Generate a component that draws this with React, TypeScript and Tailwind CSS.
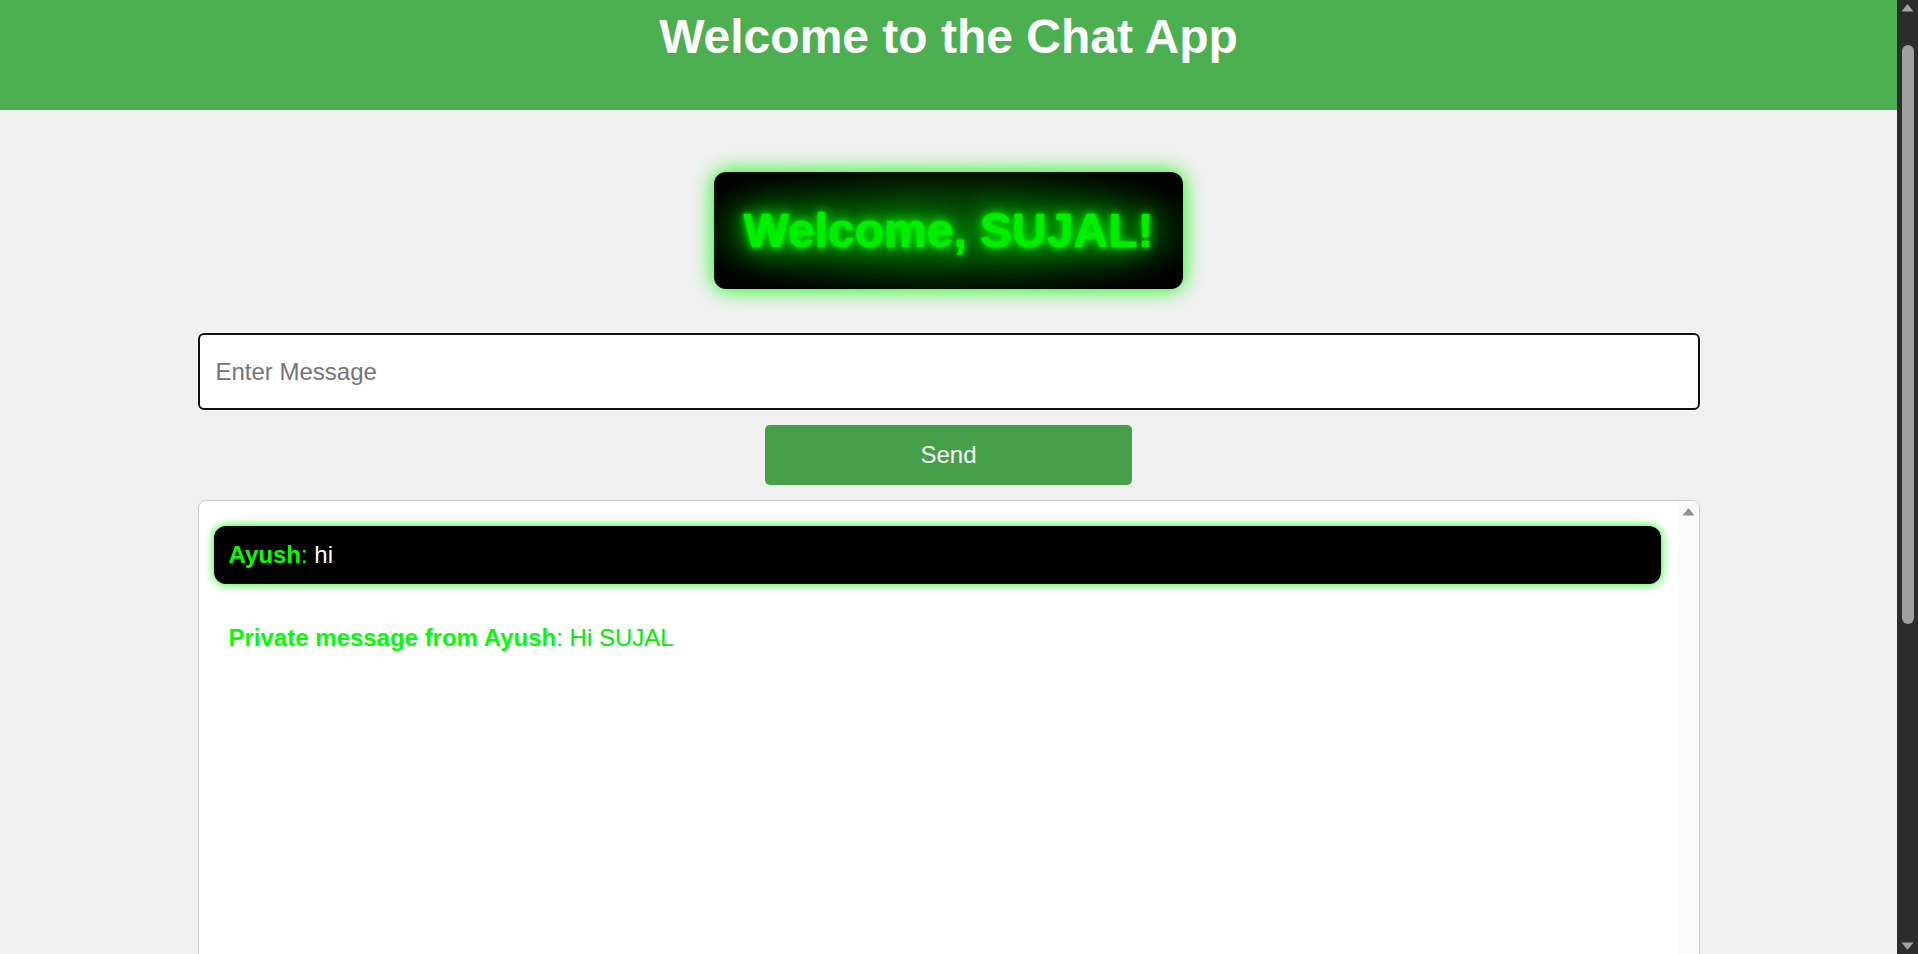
import { useState } from 'react';

interface ChatMessage {
  id: number;
  from: string;
  text: string;
  isPrivate?: boolean;
}

const initialMessages: ChatMessage[] = [
  { id: 1, from: 'Ayush', text: 'hi' },
  { id: 2, from: 'Ayush', text: 'Hi SUJAL', isPrivate: true },
];

function Arrow({ dir, color }: { dir: 'up' | 'down'; color: string }) {
  return (
    <svg width="13" height="8" viewBox="0 0 13 8">
      <path
        d={dir === 'up' ? 'M6.5 0.5 Q7 0.5 7.5 1.2 L12.5 7.5 L0.5 7.5 L5.5 1.2 Q6 0.5 6.5 0.5 Z' : 'M0.5 0.5 L12.5 0.5 L7.5 6.8 Q7 7.5 6.5 7.5 Q6 7.5 5.5 6.8 Z'}
        fill={color}
      />
    </svg>
  );
}

export default function App() {
  const [message, setMessage] = useState('');
  const [messages] = useState<ChatMessage[]>(initialMessages);
  const username = 'SUJAL';

  return (
    <div className="flex h-screen overflow-hidden bg-[#f0f0f0] font-['Liberation_Sans',Arial,sans-serif]">
      <div className="flex-1 overflow-hidden">
        {/* Top banner */}
        <header className="h-[110px] bg-[#4caf50] pt-[9px] text-center">
          <h1 className="text-[48px] font-bold leading-[55px] text-white">Welcome to the Chat App</h1>
        </header>

        <main className="flex flex-col items-center pt-[62px] pb-[15px]">
          <div className="rounded-[12px] bg-[radial-gradient(ellipse_at_center,#0b4d0b_0%,#063206_40%,#000000_85%)] px-[30px] py-[31px] shadow-[0_0_20px_#00ff00]">
            <h2 className="text-[48px] font-bold leading-[55px] text-[#00f000] [text-shadow:0_0_3px_#00ff00,0_0_10px_#00ff00,0_0_25px_#00ff00,0_0_50px_#00cc00]">
              Welcome, {username}!
            </h2>
          </div>

          <input
            autoFocus
            value={message}
            onChange={e => setMessage(e.target.value)}
            placeholder="Enter Message"
            className="mt-[44px] h-[77px] w-[1502px] rounded-[6px] border-[2.5px] border-[#101010] bg-white px-[16px] text-[24px] text-black caret-black placeholder:text-[#757575] outline-none shadow-[0_0_0_1px_#ffffff]"
          />

          <button className="mt-[15px] h-[60px] w-[367px] rounded-[5px] bg-[#45a049] text-[24px] text-white">
            Send
          </button>

          {/* Message list */}
          <div className="mt-[15px] flex h-[1000px] w-[1502px] overflow-hidden rounded-[8px] border border-[#cccccc] bg-white">
            <div className="flex-1 py-[15px] pl-[15px] pr-[17px]">
              {messages.map(m =>
                m.isPrivate ? (
                  <div key={m.id} className="mt-[25px] p-[15px] text-[24px] leading-[28px] text-[#00ee00]">
                    <strong className="font-bold text-[#00ff00]">Private message from {m.from}</strong>: {m.text}
                  </div>
                ) : (
                  <div
                    key={m.id}
                    className="mt-[10px] rounded-[12px] bg-black p-[15px] text-[24px] leading-[28px] text-white shadow-[0_0_10px_#00ff00]"
                  >
                    <strong className="font-bold text-[#00ff00]">{m.from}</strong>
                    <span className="text-[#00ff00]">:</span> {m.text}
                  </div>
                )
              )}
            </div>
            <div className="flex w-[21px] flex-col items-center bg-[#fbfbfb] pt-[7px]">
              <Arrow dir="up" color="#8f8f8f" />
            </div>
          </div>
        </main>
      </div>

      {/* page scrollbar */}
      <div className="flex w-[21px] flex-col items-center bg-[#2c2c2c] py-[4px]">
        <Arrow dir="up" color="#a3a3a3" />
        <div className="mt-[33px] h-[579px] w-[12px] rounded-full bg-[#9f9f9f]" />
        <div className="flex-1" />
        <Arrow dir="down" color="#a3a3a3" />
      </div>
    </div>
  );
}
